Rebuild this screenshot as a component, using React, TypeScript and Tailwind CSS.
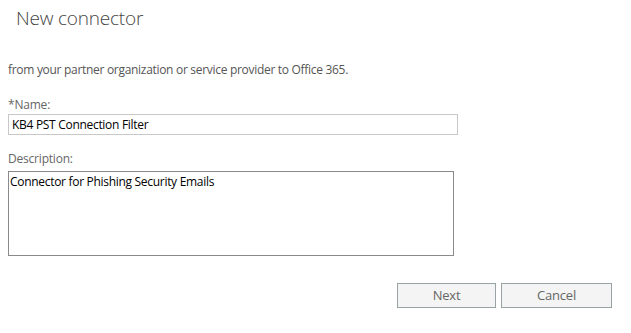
import React from "react";

export default function App() {
  const font = { fontFamily: '"Open Sans", "Noto Sans", sans-serif' };
  return (
    <div className="w-[631px] h-[333px] bg-white overflow-hidden flex flex-col" style={font}>
      <div className="h-[44px] pl-[16px] pt-[5px]">
        <h1 className="text-[19px] font-light text-[#444] leading-[26px] tracking-[-0.2px]">New connector</h1>
      </div>
      <div className="px-[8px] flex flex-col">
        <p className="mt-[18px] text-[12px] leading-[16px] text-[#555] tracking-[-0.3px] whitespace-nowrap">
          from your partner organization or service provider to Office 365.
        </p>
        <label className="mt-[19px] text-[12px] leading-[16px] text-[#666] tracking-[-0.2px]">*Name:</label>
        <div className="mt-[1px] w-[450px] h-[21px] border border-[#c8c8c8] flex items-center pl-[3px] text-[12px] text-black tracking-[-0.3px]">
          KB4 PST Connection Filter
        </div>
        <label className="mt-[16px] text-[12px] leading-[16px] text-[#666] tracking-[-0.2px]">Description:</label>
        <div className="mt-[4px] w-[446px] h-[85px] border border-[#8a8a8a] pl-[1px] pt-[2px] text-[12px] leading-[16px] text-black tracking-[-0.3px]">
          Connector for Phishing Security Emails
        </div>
        <div className="mt-[27px] flex justify-end gap-[5px] pr-[11px]">
          <button className="w-[99px] h-[25px] border border-[#98a3a6] bg-[#f4f4f4] text-[13px] text-[#666] tracking-[-0.2px]">Next</button>
          <button className="w-[111px] h-[25px] border border-[#98a3a6] bg-[#f4f4f4] text-[13px] text-[#666] tracking-[-0.2px]">Cancel</button>
        </div>
      </div>
    </div>
  );
}
